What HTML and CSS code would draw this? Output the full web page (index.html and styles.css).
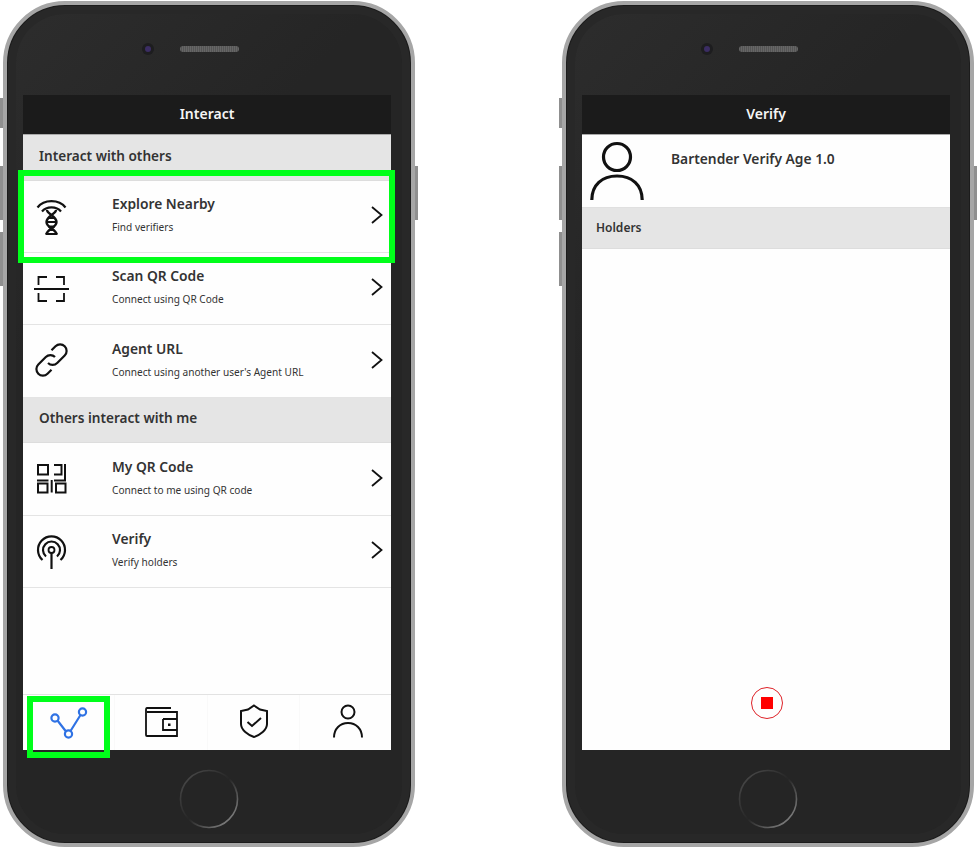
FILE: index.html
```html
<!DOCTYPE html>
<html>
<head>
  <title>Interact and Verify</title>
  <link rel="stylesheet" href="styles.css">
</head>
<body>

  <div class="phone">
    <span class="side-btn mute"></span>
    <span class="side-btn vol-up"></span>
    <span class="side-btn vol-down"></span>
    <span class="side-btn power"></span>
    <div class="bezel-top">
      <span class="camera"></span>
      <span class="speaker"></span>
    </div>
    <div class="screen">
      <div class="header">Interact</div>
      <div class="section">Interact with others</div>
      <div class="row">
        <svg class="icon" viewBox="0 0 36 36" fill="none" stroke="#111" stroke-width="2.2">
          <path d="M3.5 8.5 C10 0 25 0 31.5 8.5"/>
          <path d="M8 12.5 C12.5 7 22.5 7 27 12.5"/>
          <path d="M13 11 C13 15 22.5 17 22.5 23 C22.5 29 13 30 12.5 35 M22 11 C22 15 12.5 17 12.5 23 C12.5 29 22 30 22.5 35" stroke-width="2.4"/>
          <path d="M11.5 35 H23.5 M14 19 H21 M13 23 H22 M14 27.5 H21 M15 31 H20" stroke-width="1.8"/>
        </svg>
        <div class="row-text">
          <div class="row-title">Explore Nearby</div>
          <div class="row-sub">Find verifiers</div>
        </div>
        <svg class="chevron" viewBox="0 0 12 18" fill="none" stroke="#111" stroke-width="1.8"><path d="M1 1 L10.5 9 L1 17"/></svg>
      </div>
      <div class="row">
        <svg class="icon" viewBox="0 0 36 36" fill="none" stroke="#111" stroke-width="1.8">
          <path d="M4.5 14 V6 H13 M22 6 H30 V14 M4.5 22 V30 H13 M22 30 H30 V22"/>
          <path d="M0 18 H35"/>
        </svg>
        <div class="row-text">
          <div class="row-title">Scan QR Code</div>
          <div class="row-sub">Connect using QR Code</div>
        </div>
        <svg class="chevron" viewBox="0 0 12 18" fill="none" stroke="#111" stroke-width="1.8"><path d="M1 1 L10.5 9 L1 17"/></svg>
      </div>
      <div class="row row-tall">
        <svg class="icon" viewBox="0 0 36 36" fill="none" stroke="#111" stroke-width="2.2">
          <path d="M14 20 a6.5 6.5 0 0 0 9.2 0 l7.5 -7.5 a6.5 6.5 0 0 0 -9.2 -9.2 l-4 4"/>
          <path d="M21 14 a6.5 6.5 0 0 0 -9.2 0 l-7.5 7.5 a6.5 6.5 0 0 0 9.2 9.2 l4 -4"/>
        </svg>
        <div class="row-text">
          <div class="row-title">Agent URL</div>
          <div class="row-sub">Connect using another user's Agent URL</div>
        </div>
        <svg class="chevron" viewBox="0 0 12 18" fill="none" stroke="#111" stroke-width="1.8"><path d="M1 1 L10.5 9 L1 17"/></svg>
      </div>
      <div class="section section-mid">Others interact with me</div>
      <div class="row row-tall">
        <svg class="icon" viewBox="0 0 36 36" fill="none" stroke="#111" stroke-width="2">
          <rect x="4" y="4" width="10" height="9.5"/>
          <path d="M20 4 H27.5 V13.5 H20 M31 3 V19.5 H20 M3 19.5 H14.5 M17.7 19 V31.5"/>
          <rect x="4" y="22.5" width="9.5" height="9"/>
          <rect x="22" y="22.5" width="9.5" height="9"/>
        </svg>
        <div class="row-text">
          <div class="row-title">My QR Code</div>
          <div class="row-sub">Connect to me using QR code</div>
        </div>
        <svg class="chevron" viewBox="0 0 12 18" fill="none" stroke="#111" stroke-width="1.8"><path d="M1 1 L10.5 9 L1 17"/></svg>
      </div>
      <div class="row">
        <svg class="icon" viewBox="0 0 36 36" fill="none" stroke="#111" stroke-width="2.2">
          <circle cx="17.5" cy="16" r="3" stroke-width="1.8"/>
          <path d="M17.5 19 V35"/>
          <path d="M12 22.5 A8.5 8.5 0 1 1 23 22.5"/>
          <path d="M8.5 26 A13.5 13.5 0 1 1 26.5 26"/>
        </svg>
        <div class="row-text">
          <div class="row-title">Verify</div>
          <div class="row-sub">Verify holders</div>
        </div>
        <svg class="chevron" viewBox="0 0 12 18" fill="none" stroke="#111" stroke-width="1.8"><path d="M1 1 L10.5 9 L1 17"/></svg>
      </div>
      <div class="spacer"></div>
      <div class="tabbar">
        <div class="tab">
          <svg class="tab-route" viewBox="0 0 38 32" fill="none" stroke="#2f72e4" stroke-width="2.2">
            <circle cx="5" cy="11" r="3.6"/>
            <circle cx="18.5" cy="27" r="3.6"/>
            <circle cx="32.5" cy="5" r="3.6"/>
            <path d="M7.5 13.5 L16 24.5 M20.5 24 L30.5 8"/>
          </svg>
        </div>
        <div class="tab">
          <svg class="tab-wallet" viewBox="0 0 33 30" fill="none" stroke="#111" stroke-width="1.8">
            <path d="M26 1 H2 C1 1 1 2 1 3 V28 C1 29 1 29 2 29 H32 V5 H2"/>
            <path d="M18 12 H32 M18 12 V23 H32"/>
            <rect x="23" y="16.5" width="2.5" height="2.5" fill="#111" stroke="none"/>
          </svg>
        </div>
        <div class="tab">
          <svg class="tab-shield" viewBox="0 0 30 34" fill="none" stroke="#111" stroke-width="2">
            <path d="M15 1.5 L21 5.5 L28 7 V20 C28 26 21 31 15 33 C9 31 2 26 2 20 V7 L9 5.5 Z"/>
            <path d="M8.5 18 L13 22 L22 14"/>
          </svg>
        </div>
        <div class="tab">
          <svg class="tab-person" viewBox="0 0 30 34" fill="none" stroke="#111" stroke-width="2">
            <circle cx="15" cy="8" r="6.5"/>
            <path d="M1 33.5 C1 25 7 19 15 19 C23 19 29 25 29 33.5"/>
          </svg>
        </div>
      </div>
      <span class="mark mark-row"></span>
      <span class="mark mark-tab"></span>
    </div>
    <div class="bezel-bottom">
      <svg class="home" viewBox="0 0 60 60" fill="none" stroke-width="1.6">
        <defs>
          <linearGradient id="ring1" x1="0" y1="0" x2="1" y2="1">
            <stop offset="0" stop-color="#505050"/>
            <stop offset="0.5" stop-color="#262626"/>
            <stop offset="0.85" stop-color="#777"/>
          </linearGradient>
        </defs>
        <circle cx="30" cy="30" r="28.5" stroke="url(#ring1)"/>
      </svg>
    </div>
  </div>

  <div class="phone">
    <span class="side-btn mute"></span>
    <span class="side-btn vol-up"></span>
    <span class="side-btn vol-down"></span>
    <span class="side-btn power"></span>
    <div class="bezel-top">
      <span class="camera"></span>
      <span class="speaker"></span>
    </div>
    <div class="screen">
      <div class="header">Verify</div>
      <div class="agent">
        <svg class="agent-icon" viewBox="0 0 54 60" fill="none" stroke="#111" stroke-width="3.2">
          <circle cx="27" cy="16" r="13.5"/>
          <path d="M1.8 59 C1.8 44 12 35 27 35 C42 35 52.2 44 52.2 59"/>
        </svg>
        <div class="agent-name">Bartender Verify Age 1.0</div>
      </div>
      <div class="section section-small">Holders</div>
      <div class="spacer"></div>
      <div class="stop-wrap">
        <span class="stop"><span class="stop-square"></span></span>
      </div>
    </div>
    <div class="bezel-bottom">
      <svg class="home" viewBox="0 0 60 60" fill="none" stroke-width="1.6">
        <circle cx="30" cy="30" r="28.5" stroke="url(#ring1)"/>
      </svg>
    </div>
  </div>

</body>
</html>
```

FILE: styles.css
```css
body {
  margin: 0;
  padding: 1px 0 0 3px;
  height: 848px;
  box-sizing: border-box;
  display: flex;
  gap: 147px;
  background: #ffffff;
  font-family: "Noto Sans", sans-serif;
  overflow: hidden;
}

.phone {
  position: relative;
  width: 412px;
  height: 846px;
  box-sizing: border-box;
  padding: 0 19px 0 16px;
  display: flex;
  flex-direction: column;
  border: 4px solid #a6a6a6;
  border-radius: 62px;
  background: linear-gradient(135deg, #2d2d2d 0%, #252525 30%, #252525 100%);
  box-shadow: inset 0 0 0 1px #1c1c1c, inset 0 0 0 9px #282828;
}

.side-btn {
  position: absolute;
  width: 3px;
  background: #8f8f8f;
}

.mute {
  left: -7px;
  top: 93px;
  height: 30px;
}

.vol-up {
  left: -7px;
  top: 161px;
  height: 54px;
}

.vol-down {
  left: -7px;
  top: 227px;
  height: 54px;
}

.power {
  right: -7px;
  top: 161px;
  height: 54px;
}

.bezel-top {
  height: 90px;
  flex-shrink: 0;
  display: flex;
  align-items: flex-start;
  padding: 40px 0 0 122px;
  box-sizing: border-box;
}

.camera {
  width: 6px;
  height: 6px;
  margin-top: 1px;
  border-radius: 50%;
  background: #3b2d63;
  box-shadow: 0 0 0 3px #1d1d1f;
}

.speaker {
  width: 59px;
  height: 6px;
  margin: 1px 0 0 29px;
  border-radius: 3px;
  background: repeating-linear-gradient(90deg, #666666 0, #666666 1px, #555555 1px, #555555 2px);
}

.screen {
  position: relative;
  width: 368px;
  height: 655px;
  flex-shrink: 0;
  display: flex;
  flex-direction: column;
  background: #fefefe;
}

.header {
  height: 36px;
  flex-shrink: 0;
  display: flex;
  align-items: center;
  justify-content: center;
  padding-bottom: 3px;
  background: #1b1b1b;
  border-bottom: 1px solid #a9a9a9;
  color: #f5f5f5;
  font-size: 14px;
  font-weight: 600;
}

.section {
  height: 46px;
  flex-shrink: 0;
  box-sizing: border-box;
  padding: 10px 0 0 16px;
  background: #e5e5e5;
  color: #333333;
  font-size: 13.6px;
  line-height: 21px;
  font-weight: 600;
  border-bottom: 1px solid #dddddd;
}

.section-mid {
  height: 45px;
  padding-top: 9px;
}

.section-small {
  height: 41px;
  padding: 9px 0 0 14px;
  font-size: 12px;
}

.row {
  height: 72px;
  flex-shrink: 0;
  box-sizing: border-box;
  display: flex;
  align-items: center;
  border-bottom: 1px solid #e4e4e4;
}

.row-tall {
  height: 73px;
}

.icon {
  width: 36px;
  height: 36px;
  margin-left: 11px;
  flex-shrink: 0;
}

.row-text {
  flex: 1;
  margin-left: 42px;
  padding-bottom: 5px;
  color: #333333;
}

.row-title {
  font-size: 13.8px;
  line-height: 20px;
  font-weight: 600;
}

.row-sub {
  margin-top: 6px;
  font-size: 10.1px;
  line-height: 14px;
}

.chevron {
  width: 12px;
  height: 18px;
  margin: 0 8px 3px 0;
  flex-shrink: 0;
}

.spacer {
  flex: 1;
}

.tabbar {
  height: 56px;
  flex-shrink: 0;
  box-sizing: border-box;
  display: flex;
  border-top: 1px solid #e2e2e2;
}

.tab {
  flex: 1;
  display: flex;
  align-items: center;
  justify-content: center;
  border-left: 1px solid #f9f9f9;
}

.tab:first-child {
  border-left: none;
}

.tab-route {
  width: 38px;
  height: 32px;
}

.tab-wallet {
  width: 33px;
  height: 30px;
  margin: 0 0 2px 1px;
}

.tab-shield,
.tab-person {
  width: 30px;
  height: 34px;
  margin-bottom: 4px;
}

.tab-shield {
  margin-left: 1px;
}

.tab-person {
  margin-left: 5px;
}

.mark {
  position: absolute;
  box-sizing: border-box;
  border: 6px solid #00ff1a;
}

.mark-row {
  left: -5px;
  top: 75px;
  width: 377px;
  height: 93px;
}

.mark-tab {
  left: 4px;
  top: 601px;
  width: 83px;
  height: 62px;
}

.bezel-bottom {
  flex: 1;
  display: flex;
  justify-content: center;
  padding: 19px 0 0 2px;
  box-sizing: border-box;
}

.home {
  width: 60px;
  height: 60px;
}

.agent {
  height: 73px;
  flex-shrink: 0;
  box-sizing: border-box;
  display: flex;
  border-bottom: 1px solid #e0e0e0;
}

.agent-icon {
  width: 54px;
  height: 60px;
  margin: 6px 0 0 8px;
  flex-shrink: 0;
}

.agent-name {
  margin: 14px 0 0 27px;
  color: #333333;
  font-size: 13.8px;
  line-height: 20px;
  font-weight: 600;
}

.stop-wrap {
  height: 63px;
  flex-shrink: 0;
  display: flex;
  justify-content: center;
  padding-left: 1px;
}

.stop {
  width: 32px;
  height: 32px;
  box-sizing: border-box;
  display: flex;
  align-items: center;
  justify-content: center;
  border: 1.5px solid #de2228;
  border-radius: 50%;
}

.stop-square {
  width: 12px;
  height: 12px;
  background: #ff0000;
}
```
